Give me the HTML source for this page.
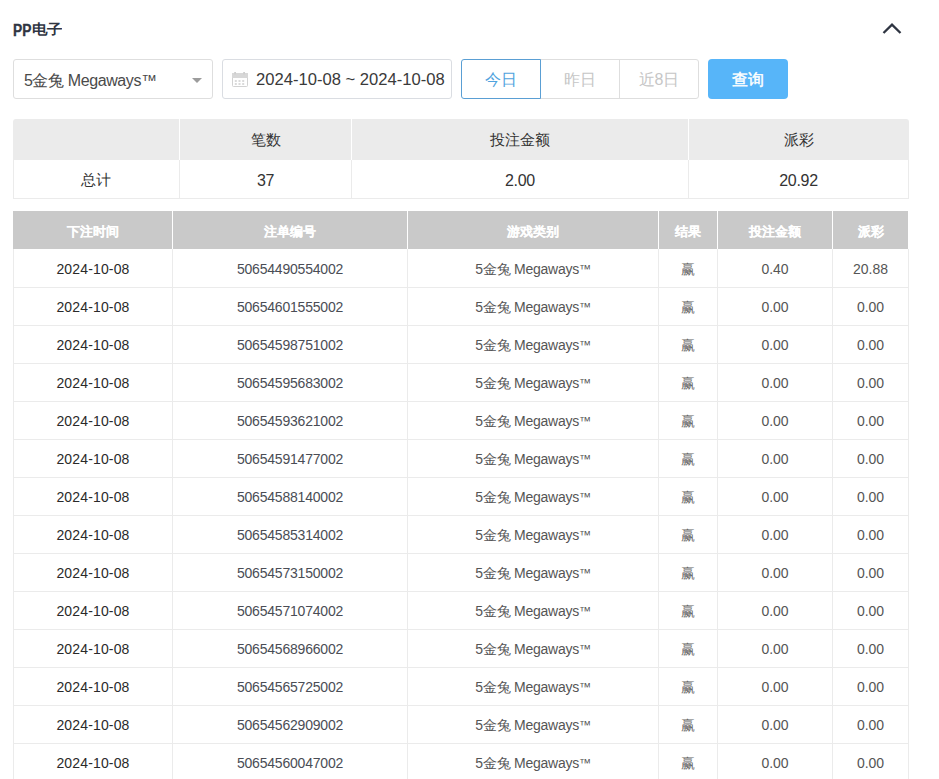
<!DOCTYPE html>
<html><head><meta charset="utf-8">
<style>
*{box-sizing:border-box;margin:0;padding:0}
html,body{width:939px;height:779px;overflow:hidden;background:#fff}
body{font-family:"Liberation Sans",sans-serif;color:#333;position:relative}
div,span{position:absolute}
.t{white-space:nowrap;text-align:center}
.title{left:13px;top:20px;font-size:15px;font-weight:bold;color:#2f3542;line-height:18px}
.chev{position:absolute;left:880px;top:20px;width:24px;height:16px}
.sel{left:13px;top:59px;width:200px;height:40px;border:1px solid #dedede;border-radius:3px}
.selt{left:10px;top:0;font-size:16px;line-height:41px;color:#4a4a4a;letter-spacing:-0.4px;white-space:nowrap}
.tri{left:178px;top:18px;width:0;height:0;border-left:5px solid transparent;border-right:5px solid transparent;border-top:5px solid #9c9c9c}
.date{left:222px;top:59px;width:230px;height:40px;border:1px solid #dadde2;border-radius:3px}
.datet{left:33px;top:0;font-size:16.6px;line-height:40px;color:#3a3a3a;white-space:nowrap}
.cal{position:absolute;left:8px;top:10px;width:18px;height:18px}
.btn{top:59px;height:40px;border:1px solid #dedede;font-size:16px;line-height:40px;text-align:center;color:#c6c6c6}
.q{left:708px;top:59px;width:80px;height:40px;border-radius:4px;background:#57b5f9;color:#fff;font-size:16px;font-weight:normal;-webkit-text-stroke:0.45px #fff;line-height:42px;text-align:center}
.hl{height:1px;background:#ebebeb}
.vl{width:1px;background:#ebebeb}
.sh{font-size:15px;color:#333;line-height:16px}
.dh{font-size:13px;font-weight:bold;color:#fff;line-height:15px;-webkit-text-stroke:0.1px #fff}
.dt{font-size:14px;line-height:16px}
</style></head><body>
<div class="title" style="width:80px;height:20px"><b style="position:absolute;left:0;top:1.5px;transform:scale(0.92,1.05);transform-origin:0 16px;font-weight:bold;-webkit-text-stroke:0.3px #2f3542">PP</b><b style="position:absolute;left:18.5px;top:-0.5px;transform:scale(1,0.9);transform-origin:0 17px;font-weight:bold">电子</b></div>
<svg class="chev" viewBox="0 0 24 16"><path d="M3.5 13 L12 4.6 L20.5 13" fill="none" stroke="#2f3542" stroke-width="2.3" stroke-linejoin="miter"/></svg>
<div class="sel"><span class="selt">5金兔 Megaways™</span><span class="tri"></span></div>
<div class="date"><svg class="cal" viewBox="0 0 18 18"><rect x="1.5" y="3.5" width="15" height="13" rx="1" fill="none" stroke="#d2d2d2"/><rect x="1" y="3" width="16" height="5" fill="#d8d8d8"/><rect x="3.2" y="2" width="1.8" height="2.5" fill="#cfcfcf"/><rect x="12.2" y="2" width="1.8" height="2.5" fill="#cfcfcf"/><g fill="#dadada"><rect x="3.8" y="10" width="2" height="2"/><rect x="7.5" y="10" width="2" height="2"/><rect x="11.2" y="10" width="2" height="2"/><rect x="3.8" y="13" width="2" height="2"/><rect x="7.5" y="13" width="2" height="2"/><rect x="11.2" y="13" width="2" height="2"/></g></svg><span class="datet">2024-10-08 ~ 2024-10-08</span></div>
<div class="btn" style="left:540px;width:80px">昨日</div>
<div class="btn" style="left:619px;width:80px;border-radius:0 3px 3px 0">近8日</div>
<div class="btn" style="left:461px;width:80px;border-color:#5a9fd4;color:#4fa3de;border-radius:3px 0 0 3px">今日</div>
<div class="q">查询</div>

<div style="left:13px;top:119px;width:896px;height:41px;background:#ebebeb;border-radius:3px 3px 0 0"></div>
<div class="vl" style="left:179px;top:119px;height:41px;background:#fff"></div>
<div class="vl" style="left:179px;top:160px;height:39px"></div>
<div class="vl" style="left:351px;top:119px;height:41px;background:#fff"></div>
<div class="vl" style="left:351px;top:160px;height:39px"></div>
<div class="vl" style="left:688px;top:119px;height:41px;background:#fff"></div>
<div class="vl" style="left:688px;top:160px;height:39px"></div>
<div class="vl" style="left:13px;top:160px;height:39px"></div>
<div class="vl" style="left:908px;top:160px;height:39px"></div>
<div class="hl" style="left:13px;top:198px;width:896px"></div>
<div class="t sh" style="left:180px;width:171px;top:132px;">笔数</div>
<div class="t sh" style="left:352px;width:336px;top:132px;">投注金额</div>
<div class="t sh" style="left:689px;width:219px;top:132px;">派彩</div>
<div class="t sh" style="left:13px;width:166px;top:172px;">总计</div>
<div class="t sh" style="left:180px;width:171px;top:173px;font-size:16px;letter-spacing:-0.3px">37</div>
<div class="t sh" style="left:352px;width:336px;top:173px;font-size:16px;letter-spacing:-0.3px">2.00</div>
<div class="t sh" style="left:689px;width:219px;top:173px;font-size:16px;letter-spacing:-0.3px">20.92</div>
<div style="left:13px;top:211px;width:895px;height:38px;background:#c9c9c9"></div>
<div class="vl" style="left:172px;top:211px;height:38px;background:#fff"></div>
<div class="vl" style="left:172px;top:249px;height:530px"></div>
<div class="vl" style="left:407px;top:211px;height:38px;background:#fff"></div>
<div class="vl" style="left:407px;top:249px;height:530px"></div>
<div class="vl" style="left:658px;top:211px;height:38px;background:#fff"></div>
<div class="vl" style="left:658px;top:249px;height:530px"></div>
<div class="vl" style="left:717px;top:211px;height:38px;background:#fff"></div>
<div class="vl" style="left:717px;top:249px;height:530px"></div>
<div class="vl" style="left:832px;top:211px;height:38px;background:#fff"></div>
<div class="vl" style="left:832px;top:249px;height:530px"></div>
<div class="vl" style="left:13px;top:249px;height:530px"></div>
<div class="vl" style="left:908px;top:249px;height:530px"></div>
<div class="t dh" style="left:14px;width:158px;top:224px;">下注时间</div>
<div class="t dh" style="left:173px;width:234px;top:224px;">注单编号</div>
<div class="t dh" style="left:408px;width:250px;top:224px;">游戏类别</div>
<div class="t dh" style="left:659px;width:58px;top:224px;">结果</div>
<div class="t dh" style="left:718px;width:114px;top:224px;">投注金额</div>
<div class="t dh" style="left:833px;width:75px;top:224px;">派彩</div>
<div class="hl" style="left:13px;top:287px;width:896px"></div>
<div class="t dt" style="left:14px;width:158px;top:261px;color:#2a2a2a;letter-spacing:0.15px">2024-10-08</div>
<div class="t dt" style="left:173px;width:234px;top:261px;color:#4a4d55;letter-spacing:-0.2px">50654490554002</div>
<div class="t dt" style="left:408px;width:250px;top:261px;color:#555;letter-spacing:-0.25px">5金兔 Megaways<b style="font-weight:normal;font-size:12px;position:relative;top:-1.5px">™</b></div>
<div class="t dt" style="left:659px;width:58px;top:261px;color:#666;letter-spacing:0">赢</div>
<div class="t dt" style="left:718px;width:114px;top:261px;color:#555;letter-spacing:0">0.40</div>
<div class="t dt" style="left:833px;width:75px;top:261px;color:#555;letter-spacing:0">20.88</div>
<div class="hl" style="left:13px;top:325px;width:896px"></div>
<div class="t dt" style="left:14px;width:158px;top:299px;color:#2a2a2a;letter-spacing:0.15px">2024-10-08</div>
<div class="t dt" style="left:173px;width:234px;top:299px;color:#4a4d55;letter-spacing:-0.2px">50654601555002</div>
<div class="t dt" style="left:408px;width:250px;top:299px;color:#555;letter-spacing:-0.25px">5金兔 Megaways<b style="font-weight:normal;font-size:12px;position:relative;top:-1.5px">™</b></div>
<div class="t dt" style="left:659px;width:58px;top:299px;color:#666;letter-spacing:0">赢</div>
<div class="t dt" style="left:718px;width:114px;top:299px;color:#555;letter-spacing:0">0.00</div>
<div class="t dt" style="left:833px;width:75px;top:299px;color:#555;letter-spacing:0">0.00</div>
<div class="hl" style="left:13px;top:363px;width:896px"></div>
<div class="t dt" style="left:14px;width:158px;top:337px;color:#2a2a2a;letter-spacing:0.15px">2024-10-08</div>
<div class="t dt" style="left:173px;width:234px;top:337px;color:#4a4d55;letter-spacing:-0.2px">50654598751002</div>
<div class="t dt" style="left:408px;width:250px;top:337px;color:#555;letter-spacing:-0.25px">5金兔 Megaways<b style="font-weight:normal;font-size:12px;position:relative;top:-1.5px">™</b></div>
<div class="t dt" style="left:659px;width:58px;top:337px;color:#666;letter-spacing:0">赢</div>
<div class="t dt" style="left:718px;width:114px;top:337px;color:#555;letter-spacing:0">0.00</div>
<div class="t dt" style="left:833px;width:75px;top:337px;color:#555;letter-spacing:0">0.00</div>
<div class="hl" style="left:13px;top:401px;width:896px"></div>
<div class="t dt" style="left:14px;width:158px;top:375px;color:#2a2a2a;letter-spacing:0.15px">2024-10-08</div>
<div class="t dt" style="left:173px;width:234px;top:375px;color:#4a4d55;letter-spacing:-0.2px">50654595683002</div>
<div class="t dt" style="left:408px;width:250px;top:375px;color:#555;letter-spacing:-0.25px">5金兔 Megaways<b style="font-weight:normal;font-size:12px;position:relative;top:-1.5px">™</b></div>
<div class="t dt" style="left:659px;width:58px;top:375px;color:#666;letter-spacing:0">赢</div>
<div class="t dt" style="left:718px;width:114px;top:375px;color:#555;letter-spacing:0">0.00</div>
<div class="t dt" style="left:833px;width:75px;top:375px;color:#555;letter-spacing:0">0.00</div>
<div class="hl" style="left:13px;top:439px;width:896px"></div>
<div class="t dt" style="left:14px;width:158px;top:413px;color:#2a2a2a;letter-spacing:0.15px">2024-10-08</div>
<div class="t dt" style="left:173px;width:234px;top:413px;color:#4a4d55;letter-spacing:-0.2px">50654593621002</div>
<div class="t dt" style="left:408px;width:250px;top:413px;color:#555;letter-spacing:-0.25px">5金兔 Megaways<b style="font-weight:normal;font-size:12px;position:relative;top:-1.5px">™</b></div>
<div class="t dt" style="left:659px;width:58px;top:413px;color:#666;letter-spacing:0">赢</div>
<div class="t dt" style="left:718px;width:114px;top:413px;color:#555;letter-spacing:0">0.00</div>
<div class="t dt" style="left:833px;width:75px;top:413px;color:#555;letter-spacing:0">0.00</div>
<div class="hl" style="left:13px;top:477px;width:896px"></div>
<div class="t dt" style="left:14px;width:158px;top:451px;color:#2a2a2a;letter-spacing:0.15px">2024-10-08</div>
<div class="t dt" style="left:173px;width:234px;top:451px;color:#4a4d55;letter-spacing:-0.2px">50654591477002</div>
<div class="t dt" style="left:408px;width:250px;top:451px;color:#555;letter-spacing:-0.25px">5金兔 Megaways<b style="font-weight:normal;font-size:12px;position:relative;top:-1.5px">™</b></div>
<div class="t dt" style="left:659px;width:58px;top:451px;color:#666;letter-spacing:0">赢</div>
<div class="t dt" style="left:718px;width:114px;top:451px;color:#555;letter-spacing:0">0.00</div>
<div class="t dt" style="left:833px;width:75px;top:451px;color:#555;letter-spacing:0">0.00</div>
<div class="hl" style="left:13px;top:515px;width:896px"></div>
<div class="t dt" style="left:14px;width:158px;top:489px;color:#2a2a2a;letter-spacing:0.15px">2024-10-08</div>
<div class="t dt" style="left:173px;width:234px;top:489px;color:#4a4d55;letter-spacing:-0.2px">50654588140002</div>
<div class="t dt" style="left:408px;width:250px;top:489px;color:#555;letter-spacing:-0.25px">5金兔 Megaways<b style="font-weight:normal;font-size:12px;position:relative;top:-1.5px">™</b></div>
<div class="t dt" style="left:659px;width:58px;top:489px;color:#666;letter-spacing:0">赢</div>
<div class="t dt" style="left:718px;width:114px;top:489px;color:#555;letter-spacing:0">0.00</div>
<div class="t dt" style="left:833px;width:75px;top:489px;color:#555;letter-spacing:0">0.00</div>
<div class="hl" style="left:13px;top:553px;width:896px"></div>
<div class="t dt" style="left:14px;width:158px;top:527px;color:#2a2a2a;letter-spacing:0.15px">2024-10-08</div>
<div class="t dt" style="left:173px;width:234px;top:527px;color:#4a4d55;letter-spacing:-0.2px">50654585314002</div>
<div class="t dt" style="left:408px;width:250px;top:527px;color:#555;letter-spacing:-0.25px">5金兔 Megaways<b style="font-weight:normal;font-size:12px;position:relative;top:-1.5px">™</b></div>
<div class="t dt" style="left:659px;width:58px;top:527px;color:#666;letter-spacing:0">赢</div>
<div class="t dt" style="left:718px;width:114px;top:527px;color:#555;letter-spacing:0">0.00</div>
<div class="t dt" style="left:833px;width:75px;top:527px;color:#555;letter-spacing:0">0.00</div>
<div class="hl" style="left:13px;top:591px;width:896px"></div>
<div class="t dt" style="left:14px;width:158px;top:565px;color:#2a2a2a;letter-spacing:0.15px">2024-10-08</div>
<div class="t dt" style="left:173px;width:234px;top:565px;color:#4a4d55;letter-spacing:-0.2px">50654573150002</div>
<div class="t dt" style="left:408px;width:250px;top:565px;color:#555;letter-spacing:-0.25px">5金兔 Megaways<b style="font-weight:normal;font-size:12px;position:relative;top:-1.5px">™</b></div>
<div class="t dt" style="left:659px;width:58px;top:565px;color:#666;letter-spacing:0">赢</div>
<div class="t dt" style="left:718px;width:114px;top:565px;color:#555;letter-spacing:0">0.00</div>
<div class="t dt" style="left:833px;width:75px;top:565px;color:#555;letter-spacing:0">0.00</div>
<div class="hl" style="left:13px;top:629px;width:896px"></div>
<div class="t dt" style="left:14px;width:158px;top:603px;color:#2a2a2a;letter-spacing:0.15px">2024-10-08</div>
<div class="t dt" style="left:173px;width:234px;top:603px;color:#4a4d55;letter-spacing:-0.2px">50654571074002</div>
<div class="t dt" style="left:408px;width:250px;top:603px;color:#555;letter-spacing:-0.25px">5金兔 Megaways<b style="font-weight:normal;font-size:12px;position:relative;top:-1.5px">™</b></div>
<div class="t dt" style="left:659px;width:58px;top:603px;color:#666;letter-spacing:0">赢</div>
<div class="t dt" style="left:718px;width:114px;top:603px;color:#555;letter-spacing:0">0.00</div>
<div class="t dt" style="left:833px;width:75px;top:603px;color:#555;letter-spacing:0">0.00</div>
<div class="hl" style="left:13px;top:667px;width:896px"></div>
<div class="t dt" style="left:14px;width:158px;top:641px;color:#2a2a2a;letter-spacing:0.15px">2024-10-08</div>
<div class="t dt" style="left:173px;width:234px;top:641px;color:#4a4d55;letter-spacing:-0.2px">50654568966002</div>
<div class="t dt" style="left:408px;width:250px;top:641px;color:#555;letter-spacing:-0.25px">5金兔 Megaways<b style="font-weight:normal;font-size:12px;position:relative;top:-1.5px">™</b></div>
<div class="t dt" style="left:659px;width:58px;top:641px;color:#666;letter-spacing:0">赢</div>
<div class="t dt" style="left:718px;width:114px;top:641px;color:#555;letter-spacing:0">0.00</div>
<div class="t dt" style="left:833px;width:75px;top:641px;color:#555;letter-spacing:0">0.00</div>
<div class="hl" style="left:13px;top:705px;width:896px"></div>
<div class="t dt" style="left:14px;width:158px;top:679px;color:#2a2a2a;letter-spacing:0.15px">2024-10-08</div>
<div class="t dt" style="left:173px;width:234px;top:679px;color:#4a4d55;letter-spacing:-0.2px">50654565725002</div>
<div class="t dt" style="left:408px;width:250px;top:679px;color:#555;letter-spacing:-0.25px">5金兔 Megaways<b style="font-weight:normal;font-size:12px;position:relative;top:-1.5px">™</b></div>
<div class="t dt" style="left:659px;width:58px;top:679px;color:#666;letter-spacing:0">赢</div>
<div class="t dt" style="left:718px;width:114px;top:679px;color:#555;letter-spacing:0">0.00</div>
<div class="t dt" style="left:833px;width:75px;top:679px;color:#555;letter-spacing:0">0.00</div>
<div class="hl" style="left:13px;top:743px;width:896px"></div>
<div class="t dt" style="left:14px;width:158px;top:717px;color:#2a2a2a;letter-spacing:0.15px">2024-10-08</div>
<div class="t dt" style="left:173px;width:234px;top:717px;color:#4a4d55;letter-spacing:-0.2px">50654562909002</div>
<div class="t dt" style="left:408px;width:250px;top:717px;color:#555;letter-spacing:-0.25px">5金兔 Megaways<b style="font-weight:normal;font-size:12px;position:relative;top:-1.5px">™</b></div>
<div class="t dt" style="left:659px;width:58px;top:717px;color:#666;letter-spacing:0">赢</div>
<div class="t dt" style="left:718px;width:114px;top:717px;color:#555;letter-spacing:0">0.00</div>
<div class="t dt" style="left:833px;width:75px;top:717px;color:#555;letter-spacing:0">0.00</div>
<div class="hl" style="left:13px;top:781px;width:896px"></div>
<div class="t dt" style="left:14px;width:158px;top:755px;color:#2a2a2a;letter-spacing:0.15px">2024-10-08</div>
<div class="t dt" style="left:173px;width:234px;top:755px;color:#4a4d55;letter-spacing:-0.2px">50654560047002</div>
<div class="t dt" style="left:408px;width:250px;top:755px;color:#555;letter-spacing:-0.25px">5金兔 Megaways<b style="font-weight:normal;font-size:12px;position:relative;top:-1.5px">™</b></div>
<div class="t dt" style="left:659px;width:58px;top:755px;color:#666;letter-spacing:0">赢</div>
<div class="t dt" style="left:718px;width:114px;top:755px;color:#555;letter-spacing:0">0.00</div>
<div class="t dt" style="left:833px;width:75px;top:755px;color:#555;letter-spacing:0">0.00</div>
<div class="hl" style="left:13px;top:819px;width:896px"></div>
<div class="t dt" style="left:14px;width:158px;top:793px;color:#2a2a2a;letter-spacing:0.15px">2024-10-08</div>
<div class="t dt" style="left:173px;width:234px;top:793px;color:#4a4d55;letter-spacing:-0.2px">50654557001002</div>
<div class="t dt" style="left:408px;width:250px;top:793px;color:#555;letter-spacing:-0.25px">5金兔 Megaways<b style="font-weight:normal;font-size:12px;position:relative;top:-1.5px">™</b></div>
<div class="t dt" style="left:659px;width:58px;top:793px;color:#666;letter-spacing:0">赢</div>
<div class="t dt" style="left:718px;width:114px;top:793px;color:#555;letter-spacing:0">0.00</div>
<div class="t dt" style="left:833px;width:75px;top:793px;color:#555;letter-spacing:0">0.00</div>
</body></html>
